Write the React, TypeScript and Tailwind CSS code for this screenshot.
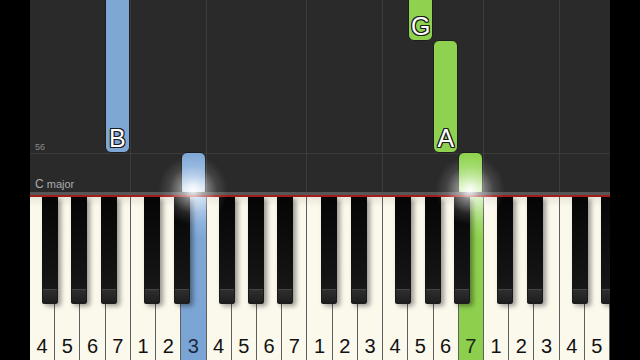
import React from "react";

const WHITE = ["4","5","6","7","1","2","3","4","5","6","7","1","2","3","4","5","6","7","1","2","3","4","5"];

// black key after each white key label; right offset (px) from the key's right edge
const BLACK: Record<string, string> = {
  "4": "right-[-4px]",
  "5": "right-[-8px]",
  "6": "right-[-12px]",
  "1": "right-[-5px]",
  "2": "right-[-10px]",
};

const GRID_LINES = [4, 7, 11, 14, 18, 21];

const outline =
  "[text-shadow:1px_0_0_#1b1b1b,-1px_0_0_#1b1b1b,0_1px_0_#1b1b1b,0_-1px_0_#1b1b1b,1px_1px_0_#1b1b1b,-1px_-1px_0_#1b1b1b,1px_-1px_0_#1b1b1b,-1px_1px_0_#1b1b1b]";

function Note({ top, height, color, label, glow }: { top: string; height: string; color: "blue" | "green"; label?: string; glow?: boolean }) {
  const bg =
    color === "blue"
      ? glow
        ? "bg-[linear-gradient(to_bottom,#80a8d6_0%,#8fb4de_55%,#d6e6f6_100%)]"
        : "bg-[#7fa7d4]"
      : glow
        ? "bg-[linear-gradient(to_bottom,#8fd350_0%,#9cda62_55%,#d4f4b0_100%)]"
        : "bg-[#8ed24f]";
  return (
    <div
      className={`absolute inset-x-0 ${top} ${height} ${bg} flex items-end justify-center rounded-[6px] border border-[#1d1d1d] pb-[1px]`}
    >
      {label && (
        <span className={`text-[25px] leading-none text-white ${outline}`} style={{ fontFamily: '"Liberation Sans", Arial, sans-serif' }}>
          {label}
        </span>
      )}
    </div>
  );
}

export default function App() {
  const notes: Record<number, React.ReactNode> = {
    3: <Note top="top-[-10px]" height="h-[163px]" color="blue" label="B" />,
    6: <Note top="top-[152px]" height="h-[44px]" color="blue" glow />,
    15: <Note top="top-[-10px]" height="h-[51px]" color="green" label="G" />,
    16: <Note top="top-[40px]" height="h-[113px]" color="green" label="A" />,
    17: <Note top="top-[152px]" height="h-[44px]" color="green" glow />,
  };

  return (
    <div className="flex h-[360px] w-[640px] overflow-hidden bg-black" style={{ fontFamily: '"Liberation Sans", Arial, sans-serif' }}>
      <div className="w-[30px] shrink-0" />
      <div className="relative flex w-[580px] shrink-0 flex-col">
        {/* falling notes */}
        <div className="relative h-[192px] overflow-hidden bg-[#2a2a2a]">
          <div className="absolute inset-x-0 top-[153px] h-px bg-[#3b3b3b]" />
          <span className="absolute left-[5px] top-[141px] text-[9px] text-[#8a8a8a]">56</span>
          <span className="absolute left-[5px] top-[175px] text-[11px] text-[#ababab]">
            <span className="text-[12px]">C</span> major
          </span>
          <div className="flex h-full">
            {WHITE.map((_, i) => (
              <div key={i} className={`relative flex-1 ${GRID_LINES.includes(i) ? "border-l border-[#3c3c3c]" : ""}`}>
                {notes[i]}
              </div>
            ))}
          </div>
        </div>
        <div className="h-[3px] bg-[#575757]" />
        <div className="h-[2px] bg-[#a41d1d]" />

        {/* keyboard */}
        <div className="flex h-[163px] overflow-hidden">
          {WHITE.map((n, i) => {
            const hl =
              i === 6
                ? "bg-[linear-gradient(to_bottom,#a9c6e8_0%,#7ea7d6_25%,#7aa4d4_100%)] text-[#1c2940]"
                : i === 17
                  ? "bg-[linear-gradient(to_bottom,#bfe99a_0%,#8fd24f_25%,#8ccf4c_100%)] text-[#1c2a14]"
                  : "bg-[linear-gradient(to_bottom,#e9e6da_0%,#fbf8ec_6%,#fbf8ec_100%)] text-[#111]";
            return (
              <div key={i} className={`relative flex flex-1 flex-col justify-end border-r border-[#5f5f5f] pb-[4px] ${hl}`}>
                <span className="text-center text-[20px] leading-none">{n}</span>
                {BLACK[n] && (
                  <div
                    className={`absolute top-0 z-10 flex h-[107px] w-[16px] flex-col justify-end rounded-b-[2px] bg-[linear-gradient(to_bottom,#050505_0%,#141414_75%,#1c1c1c_100%)] shadow-[3px_2px_5px_rgba(0,0,0,0.4)] ${BLACK[n]}`}
                  >
                    <div className="mx-[1px] mb-[2px] h-[13px] rounded-b-[2px] border-t border-[#444] bg-[linear-gradient(to_bottom,#2e2e2e,#1f1f1f)]" />
                  </div>
                )}
              </div>
            );
          })}
        </div>

        {/* hit glows */}
        <div className="pointer-events-none absolute left-[128px] top-[155px] z-20 h-[70px] w-[70px] rounded-full bg-[radial-gradient(circle,rgba(255,255,255,0.95)_0%,rgba(255,255,255,0.5)_20%,rgba(255,255,255,0.12)_48%,rgba(255,255,255,0)_70%)]" />
        <div className="pointer-events-none absolute left-[405px] top-[155px] z-20 h-[70px] w-[70px] rounded-full bg-[radial-gradient(circle,rgba(255,255,255,0.95)_0%,rgba(255,255,255,0.5)_20%,rgba(255,255,255,0.12)_48%,rgba(255,255,255,0)_70%)]" />
      </div>
      <div className="flex-1" />
    </div>
  );
}
